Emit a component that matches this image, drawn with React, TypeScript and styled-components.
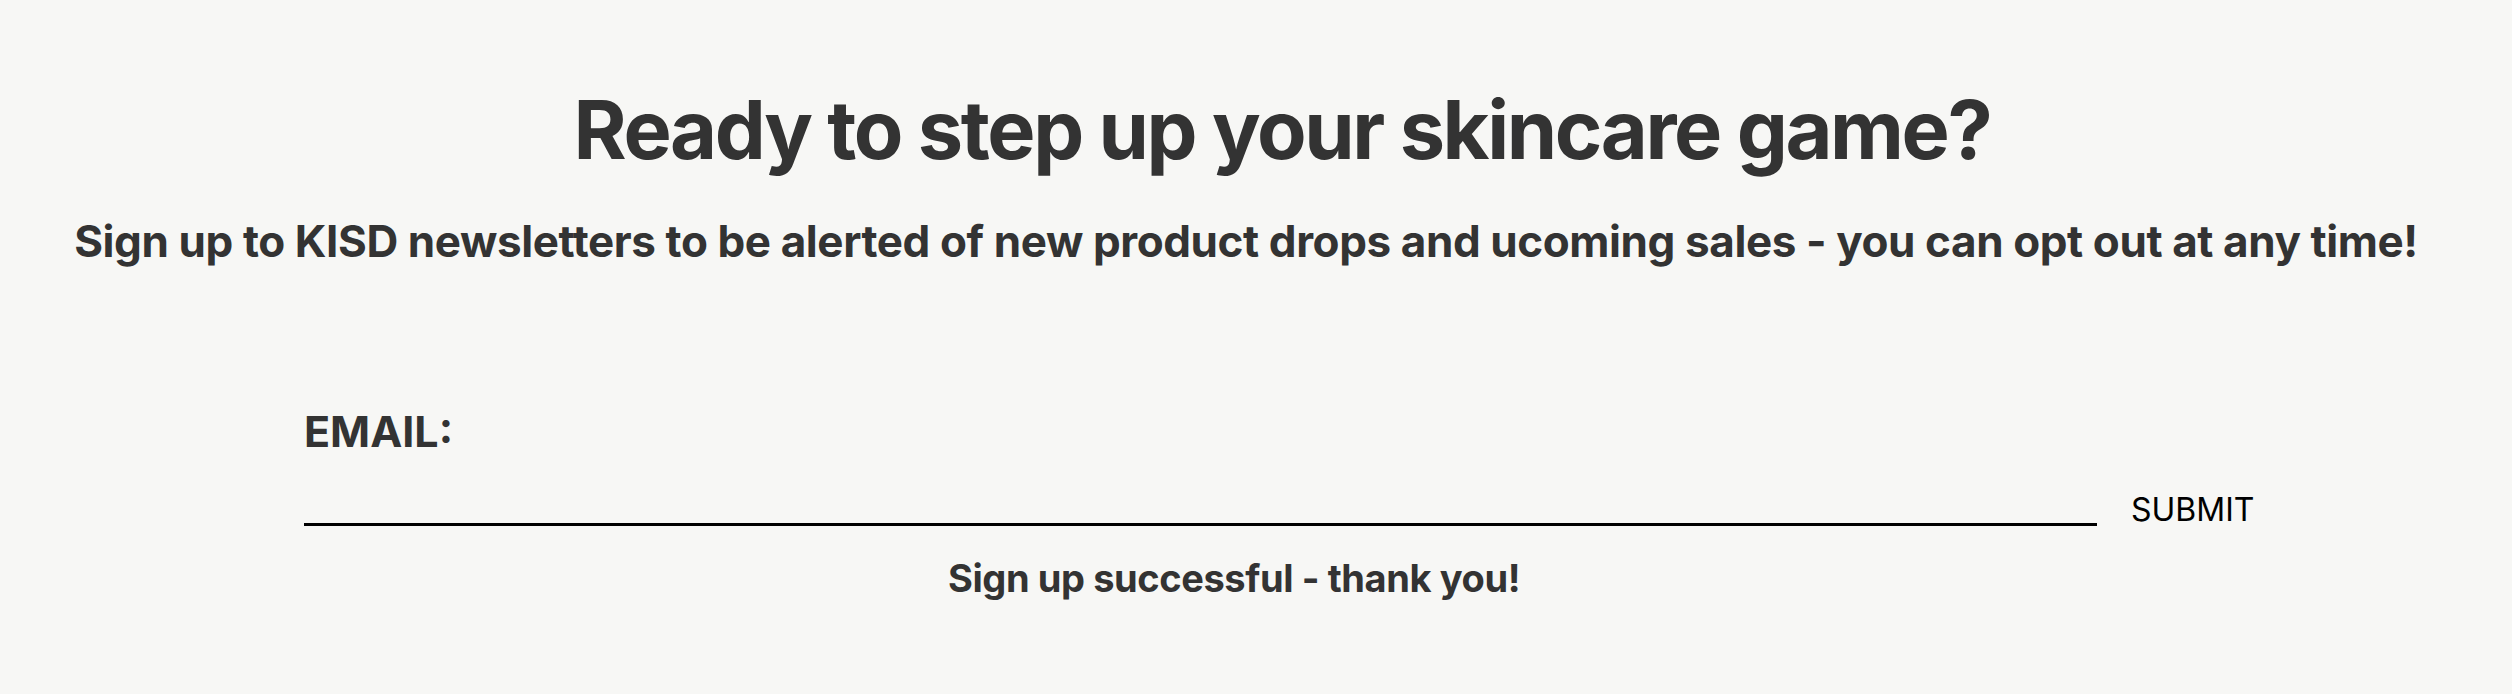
import { createGlobalStyle, styled } from "styled-components";

const GlobalStyle = createGlobalStyle`
    html, body {
        margin: 0;
        padding: 0;
        background-color: #f7f7f5;
    }
    body {
        font-family: "Inter", "Liberation Sans", sans-serif;
        color: #333333;
    }
`;

const StyledNewsletter = styled.section`
    padding: 90px 0 60px;

    .newsletter__title {
        margin: 0;
        padding-left: 52px;
        text-align: center;
        font-size: 81px;
        font-weight: 700;
        line-height: 1;
        letter-spacing: -2.4px;
    }

    .newsletter__desc {
        margin: 44px 0 0;
        padding-right: 20px;
        text-align: center;
        font-size: 44px;
        font-weight: 700;
        line-height: 1.2;
        letter-spacing: -0.4px;
    }
`;

const StyledForm = styled.form`
    margin-top: 138px;
    padding-left: 304px;

    .form__label {
        display: block;
        font-size: 43px;
        font-weight: 700;
        line-height: 1.2;
    }
`;

const InputRow = styled.div`
    display: flex;
    align-items: flex-end;
    margin-top: 22px;
`;

const EmailInput = styled.input`
    width: 1793px;
    height: 44px;
    padding: 0;
    border: none;
    border-bottom: 3px solid #000000;
    background: transparent;
    outline: none;
    font-family: inherit;
    font-size: 32px;
`;

const SubmitButton = styled.button`
    margin-left: 34px;
    padding: 0;
    border: none;
    background: transparent;
    color: #000000;
    font-family: inherit;
    font-size: 32px;
    font-weight: 400;
    line-height: 1;
    cursor: pointer;
`;

const SuccessMessage = styled.p`
    width: 1860px;
    margin: 30px 0 0;
    text-align: center;
    font-size: 38px;
    font-weight: 700;
    line-height: 1.2;
    letter-spacing: -0.4px;
`;

const App = () => {
    return (
        <>
            <GlobalStyle />
            <StyledNewsletter>
                {/* 헤더 */}
                <h2 className="newsletter__title">Ready to step up your skincare game?</h2>
                <p className="newsletter__desc">
                    Sign up to KISD newsletters to be alerted of new product drops and ucoming sales - you can opt out at any time!
                </p>

                {/* 이메일 입력 */}
                <StyledForm onSubmit={(e) => e.preventDefault()}>
                    <label htmlFor="email" className="form__label">EMAIL:</label>
                    <InputRow>
                        <EmailInput type="email" id="email" />
                        <SubmitButton type="submit">SUBMIT</SubmitButton>
                    </InputRow>
                    <SuccessMessage>Sign up successful - thank you!</SuccessMessage>
                </StyledForm>
            </StyledNewsletter>
        </>
    );
};

export default App;
